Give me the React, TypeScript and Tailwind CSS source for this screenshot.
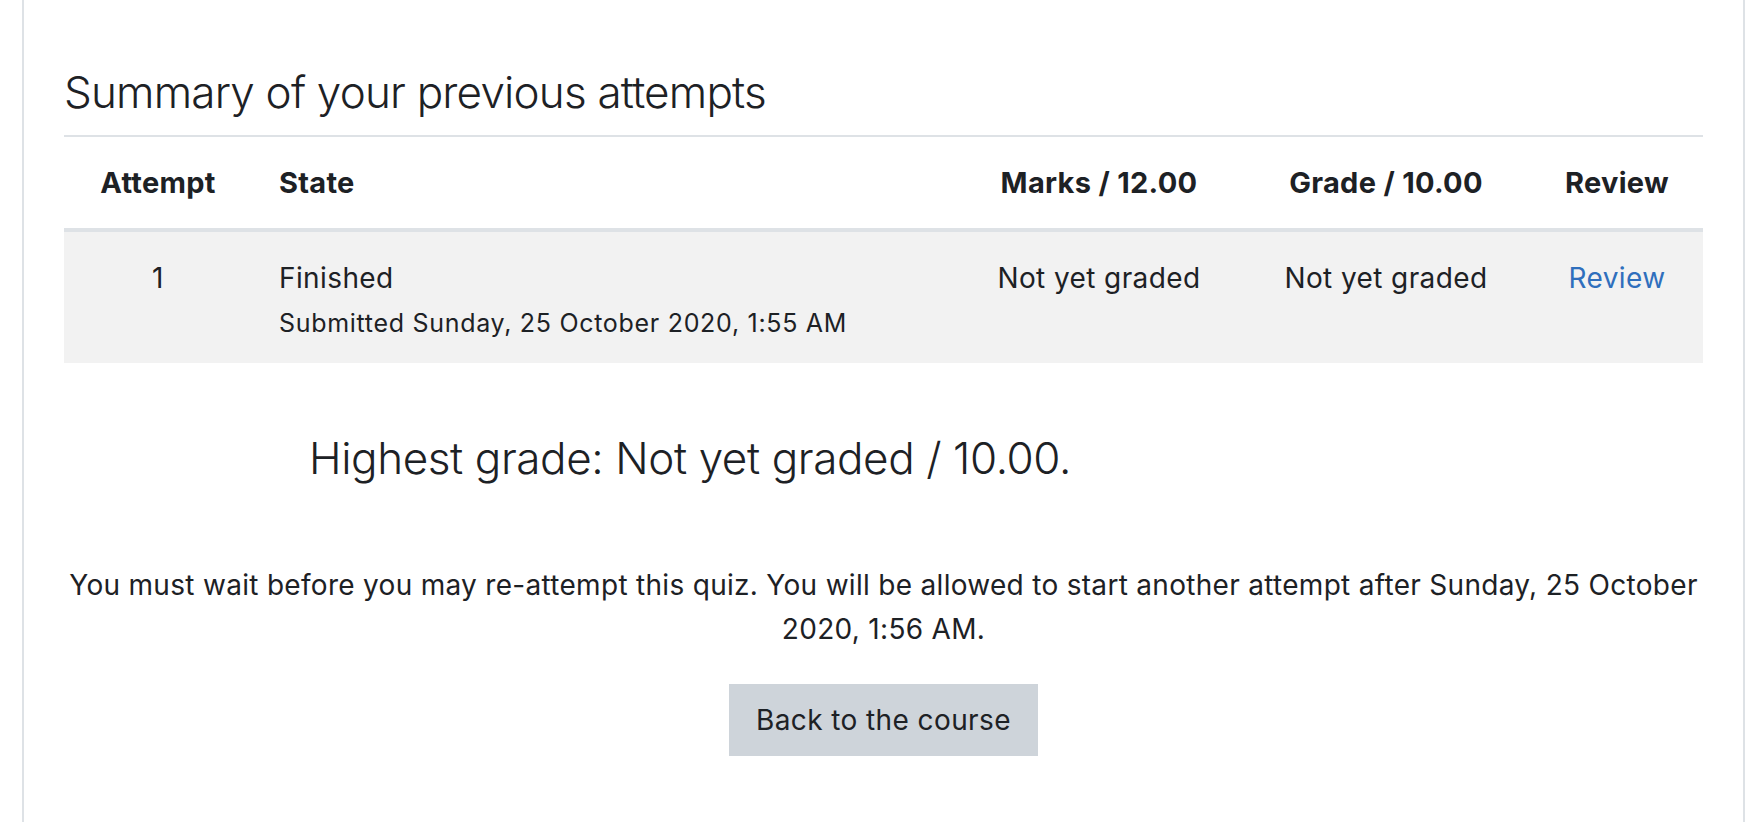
const attempts = [
  {
    attempt: 1,
    state: 'Finished',
    submitted: 'Submitted Sunday, 25 October 2020, 1:55 AM',
    marks: 'Not yet graded',
    grade: 'Not yet graded',
  },
];

const font = { fontFamily: 'Inter, "Noto Sans", sans-serif' };

export default function App() {
  return (
    <div className="h-[822px] w-full overflow-hidden bg-white text-[#1d2125]" style={font}>
      <div className="ml-[22px] h-full w-[1723px] border-x-2 border-[#dee2e6] px-10">
        <h2 className="pt-[64px] text-[44px] leading-[56px] font-light tracking-[-0.8px]">
          Summary of your previous attempts
        </h2>

        <div className="mt-[15px] border-t-2 border-[#dee2e6]">
          <div className="grid h-[95px] grid-cols-[188px_704px_286px_288px_174px] items-center border-b-4 border-[#dee2e6] text-[29px] leading-[42px] font-bold tracking-[0.3px]">
            <div className="text-center">Attempt</div>
            <div className="pl-[27px]">State</div>
            <div className="text-center">Marks / 12.00</div>
            <div className="text-center">Grade / 10.00</div>
            <div className="text-center">Review</div>
          </div>

          {attempts.map((a) => (
            <div
              key={a.attempt}
              className="grid h-[131px] grid-cols-[188px_704px_286px_288px_174px] bg-[#f2f2f2] pt-[25px] text-[28px] leading-[42px] tracking-[0.4px]"
            >
              <div className="text-center">{a.attempt}</div>
              <div className="pl-[27px]">
                <div>{a.state}</div>
                <div className="mt-2 text-[25px] leading-[33px] tracking-[0.7px]">{a.submitted}</div>
              </div>
              <div className="text-center">{a.marks}</div>
              <div className="text-center">{a.grade}</div>
              <div className="text-center">
                <a href="#" className="text-[#2f6fbd]">
                  Review
                </a>
              </div>
            </div>
          ))}
        </div>

        <h3 className="mt-[67px] pl-[245px] text-[44px] leading-[56px] font-light tracking-[-0.4px]">
          Highest grade: Not yet graded / 10.00.
        </h3>

        <p className="mt-[77px] text-center text-[28px] leading-[44px] tracking-[0.3px]">
          You must wait before you may re-attempt this quiz. You will be allowed to start another attempt after Sunday, 25 October 2020, 1:56 AM.
        </p>

        <div className="mt-[33px] flex justify-center">
          <button className="bg-[#ced4da] px-[27px] py-[15px] text-[28px] leading-[42px] tracking-[0.4px]">
            Back to the course
          </button>
        </div>
      </div>
    </div>
  );
}
